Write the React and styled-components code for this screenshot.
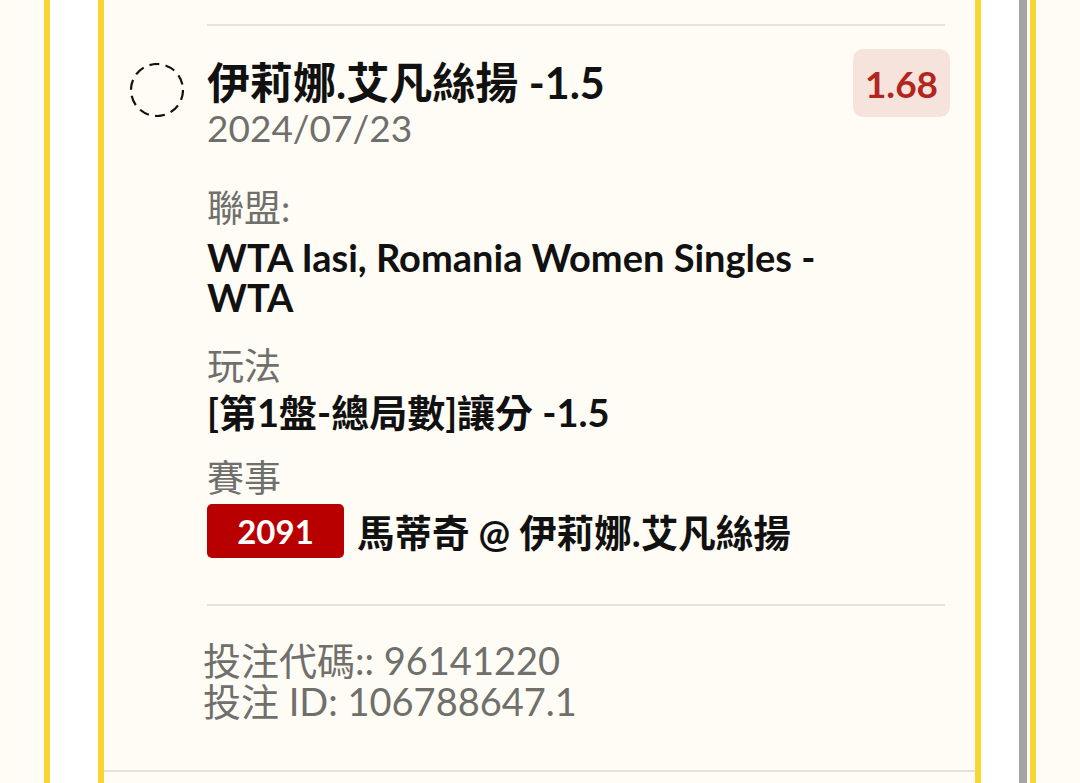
import React from "react";
import styled, { createGlobalStyle } from "styled-components";

const GlobalStyle = createGlobalStyle`
  html, body {
    margin: 0;
    padding: 0;
    overflow: hidden;
    background: #fefcf4;
  }
  body {
    font-family: Lato, "Noto Sans CJK TC", sans-serif;
  }
`;

const Page = styled.div`
  height: 100vh;
  padding-left: 44px;
  box-sizing: border-box;
  background: #fefcf4;
`;

const Frame = styled.div`
  width: 992px;
  height: 100%;
  box-sizing: border-box;
  display: flex;
  padding-left: 48px;
  background: #ffffff;
  border-left: 6px solid #f8d531;
  border-right: 6px solid #f8d531;
`;

const Card = styled.div`
  width: 883px;
  box-sizing: border-box;
  background: #fefcf4;
  border-left: 6px solid #f8d531;
  border-right: 6px solid #f8d531;
`;

const Gutter = styled.div`
  width: 38px;
`;

const ScrollThumb = styled.div`
  width: 8px;
  background: #a4a4a4;
`;

const Item = styled.div`
  display: flex;
  gap: 23px;
  padding: 24px 25px 48px 26px;
  border-bottom: 2px solid #e6e3dc;
`;

const Circle = styled.svg`
  flex: none;
  margin-top: 39px;
`;

const Content = styled.div`
  flex: 1;
  display: flex;
  flex-direction: column;
`;

const Divider = styled.div`
  height: 2px;
  margin-right: 5px;
  margin-top: ${(p) => p.$top || 0}px;
  background: #e6e3dc;
`;

const Header = styled.div`
  display: flex;
  justify-content: space-between;
  align-items: flex-start;
  margin-top: 23px;
`;

const TitleBlock = styled.div`
  padding-top: 11px;
`;

const Title = styled.div`
  font-size: 43px;
  line-height: 46px;
  font-weight: 700;
  color: #111;
`;

const DateText = styled.div`
  font-size: 37px;
  line-height: 44px;
  color: #6f6f6c;
`;

const Odds = styled.div`
  width: 97px;
  height: 68px;
  border-radius: 10px;
  display: flex;
  align-items: center;
  justify-content: center;
  background: #f6e4dc;
  color: #b3261e;
  font-size: 37px;
  font-weight: 700;
`;

const Section = styled.div`
  margin-top: ${(p) => p.$top}px;
`;

const Label = styled.div`
  font-size: 37px;
  line-height: 40px;
  color: #6f6f6c;
`;

const Value = styled.div`
  max-width: 640px;
  margin-top: ${(p) => p.$top || 6}px;
  font-size: 38px;
  line-height: 40px;
  font-weight: 700;
  color: #111;
`;

const MatchRow = styled.div`
  display: flex;
  align-items: center;
  gap: 13px;
  margin-top: 5px;
`;

const MatchBadge = styled.div`
  width: 137px;
  height: 54px;
  border-radius: 5px;
  display: flex;
  align-items: center;
  justify-content: center;
  background: #b90000;
  color: #fff;
  font-size: 33px;
  font-weight: 700;
`;

const Teams = styled.div`
  font-size: 37.5px;
  font-weight: 700;
  color: #111;
`;

const Footer = styled.div`
  margin-top: 34px;
  margin-left: -4px;
  font-size: 38px;
  line-height: 41px;
  color: #6f6f6c;
`;

export default function App() {
  return (
    <>
      <GlobalStyle />
      <Page>
        <Frame>
          <Card>
            <Item>
              <Circle width="54" height="54" viewBox="0 0 54 54">
                <circle
                  cx="27"
                  cy="27"
                  r="26"
                  fill="none"
                  stroke="#111"
                  strokeWidth="2.2"
                  strokeDasharray="10 6.3"
                />
              </Circle>
              <Content>
                <Divider />
                <Header>
                  <TitleBlock>
                    <Title>伊莉娜.艾凡絲揚 -1.5</Title>
                    <DateText>2024/07/23</DateText>
                  </TitleBlock>
                  <Odds>1.68</Odds>
                </Header>
                <Section $top={38}>
                  <Label>聯盟:</Label>
                  <Value $top={9}>WTA Iasi, Romania Women Singles - WTA</Value>
                </Section>
                <Section $top={29}>
                  <Label>玩法</Label>
                  <Value>[第1盤-總局數]讓分 -1.5</Value>
                </Section>
                <Section $top={26}>
                  <Label>賽事</Label>
                  <MatchRow>
                    <MatchBadge>2091</MatchBadge>
                    <Teams>馬蒂奇 @ 伊莉娜.艾凡絲揚</Teams>
                  </MatchRow>
                </Section>
                <Divider $top={46} />
                <Footer>
                  <div>投注代碼:: 96141220</div>
                  <div>投注 ID: 106788647.1</div>
                </Footer>
              </Content>
            </Item>
          </Card>
          <Gutter />
          <ScrollThumb />
        </Frame>
      </Page>
    </>
  );
}
